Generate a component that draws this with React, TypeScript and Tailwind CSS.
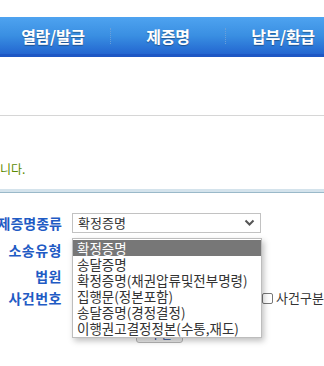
import React from 'react';

const menu = ['열람/발급', '제증명', '납부/환급'];

const options = [
    '확정증명',
    '송달증명',
    '확정증명(채권압류및전부명령)',
    '집행문(정본포함)',
    '송달증명(경정결정)',
    '이행권고결정정본(수통,재도)',
];

const font = { fontFamily: '"Noto Sans CJK KR", "Noto Sans", sans-serif' };

export default function App() {
    return (
        <div className="relative w-[324px] h-[366px] overflow-hidden bg-white" style={font}>
            {/* Top menu bar */}
            <div className="mt-[17px] h-[40px] flex items-center bg-gradient-to-b from-[#4ea3f0] via-[#3a8fe2] to-[#2466d0] border-b-[3px] border-[#1d57c4]">
                {menu.map((m, i) => (
                    <React.Fragment key={m}>
                        {i > 0 && <div className="h-[16px] border-l border-dotted border-[#6a9fd8]" />}
                        <div className={`shrink-0 w-[114px] text-center text-white font-bold text-[16px] tracking-[-0.3px] [text-shadow:0_1px_1px_rgba(0,0,0,0.35)] ${i === 0 ? 'ml-[-4px]' : ''}`}>
                            {m}
                        </div>
                    </React.Fragment>
                ))}
            </div>

            <div className="mt-[58px] h-px bg-[#d6d6d6]" />

            <div className="mt-[46px] text-[12px] leading-[14px] text-[#5b8a00]">니다.</div>

            <div className="mt-[13px] h-[4px] bg-[#d4e3ec] border-b border-[#9ab9c9]" />

            {/* Form */}
            <div className="mt-[20px] flex flex-col">
                <div className="flex items-center h-[20px]">
                    <div className="w-[62px] flex justify-end text-[14px] font-bold text-[#1f5bc4] whitespace-nowrap">제증명종류</div>
                    <div className="ml-[10px] w-[189px] h-[20px] border border-[#c2c2c2] flex items-center justify-between px-[5px] text-[13px] text-[#333]">
                        <span>확정증명</span>
                        <svg width="11" height="8" viewBox="0 0 11 8">
                            <path d="M1.5 1.5 L5.5 5.5 L9.5 1.5" fill="none" stroke="#555" strokeWidth="2" />
                        </svg>
                    </div>
                </div>
                <div className="flex items-center h-[20px] mt-[7px]">
                    <div className="w-[62px] text-right text-[14px] font-bold text-[#1f5bc4] tracking-[0.5px]">소송유형</div>
                </div>
                <div className="flex items-center h-[20px] mt-[6px]">
                    <div className="w-[62px] text-right text-[14px] font-bold text-[#1f5bc4] tracking-[0.5px]">법원</div>
                </div>
                <div className="flex items-center h-[20px] mt-[2px]">
                    <div className="w-[62px] text-right text-[14px] font-bold text-[#1f5bc4] tracking-[0.5px]">사건번호</div>
                    <div className="ml-[200px] flex items-center gap-[3px] text-[13px] text-[#333] whitespace-nowrap">
                        <span className="w-[11px] h-[11px] border border-[#777] rounded-[2px]" />
                        사건구분
                    </div>
                </div>
                <div className="mt-[17px] ml-[136px] w-[47px] h-[18px] border border-[#b5b5b5] rounded-[3px] bg-gradient-to-b from-white to-[#eaeaea] text-[12px] leading-[16px] text-center text-[#1f4f9c]">
                    확 인
                </div>
            </div>

            {/* Open select list */}
            <div className="absolute left-[72px] top-[238px] w-[190px] bg-white border border-[#bdbdbd] shadow-[2px_3px_6px_rgba(0,0,0,0.25)] py-px">
                {options.map((o, i) => (
                    <div
                        key={o}
                        className={`h-[16px] px-[4px] text-[13.5px] leading-[16px] whitespace-nowrap ${i === 0 ? 'bg-[#777] text-white' : 'text-[#333]'}`}
                    >
                        {o}
                    </div>
                ))}
            </div>
        </div>
    );
}
